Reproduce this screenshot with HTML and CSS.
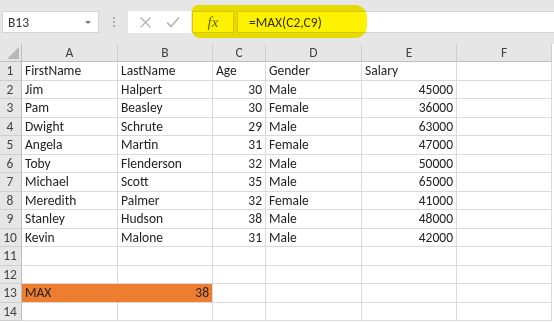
FILE: index.html
```html
<!DOCTYPE html>
<html lang="en">
<head>
    <meta charset="UTF-8">
    <title>Employees</title>
    <link rel="stylesheet" href="styles.css">
</head>
<body>
    <div class="toolbar">
        <div class="namebox">
            <span>B13</span>
            <span class="caret"></span>
        </div>
        <div class="grip">
            <svg width="4" height="12" viewBox="0 0 4 12"><circle cx="2" cy="2" r="1" fill="#9a9a9a"/><circle cx="2" cy="6" r="1" fill="#9a9a9a"/><circle cx="2" cy="10" r="1" fill="#9a9a9a"/></svg>
        </div>
        <div class="buttons">
            <svg width="13" height="13" viewBox="0 0 13 13"><path d="M1.5 1.5 L11.5 11.5 M11.5 1.5 L1.5 11.5" stroke="#b4b4b4" stroke-width="1.3" fill="none"/></svg>
            <svg width="14" height="12" viewBox="0 0 14 12"><path d="M1 6.5 L5 10.5 L13 1.5" stroke="#b4b4b4" stroke-width="1.6" fill="none"/></svg>
        </div>
        <div class="fx">fx</div>
        <div class="formula">=MAX(C2,C9)</div>
        <div class="highlight"></div>
    </div>

    <div class="sheet">
        <div class="corner"><span class="tri"></span></div>
        <div class="colhead">A</div>
        <div class="colhead">B</div>
        <div class="colhead">C</div>
        <div class="colhead">D</div>
        <div class="colhead">E</div>
        <div class="colhead">F</div>

        <div class="rowhead">1</div>
        <div class="cell">FirstName</div><div class="cell">LastName</div><div class="cell">Age</div><div class="cell">Gender</div><div class="cell">Salary</div><div class="cell"></div>

        <div class="rowhead">2</div>
        <div class="cell">Jim</div><div class="cell">Halpert</div><div class="cell num">30</div><div class="cell">Male</div><div class="cell num">45000</div><div class="cell"></div>

        <div class="rowhead">3</div>
        <div class="cell">Pam</div><div class="cell">Beasley</div><div class="cell num">30</div><div class="cell">Female</div><div class="cell num">36000</div><div class="cell"></div>

        <div class="rowhead">4</div>
        <div class="cell">Dwight</div><div class="cell">Schrute</div><div class="cell num">29</div><div class="cell">Male</div><div class="cell num">63000</div><div class="cell"></div>

        <div class="rowhead">5</div>
        <div class="cell">Angela</div><div class="cell">Martin</div><div class="cell num">31</div><div class="cell">Female</div><div class="cell num">47000</div><div class="cell"></div>

        <div class="rowhead">6</div>
        <div class="cell">Toby</div><div class="cell">Flenderson</div><div class="cell num">32</div><div class="cell">Male</div><div class="cell num">50000</div><div class="cell"></div>

        <div class="rowhead">7</div>
        <div class="cell">Michael</div><div class="cell">Scott</div><div class="cell num">35</div><div class="cell">Male</div><div class="cell num">65000</div><div class="cell"></div>

        <div class="rowhead">8</div>
        <div class="cell">Meredith</div><div class="cell">Palmer</div><div class="cell num">32</div><div class="cell">Female</div><div class="cell num">41000</div><div class="cell"></div>

        <div class="rowhead">9</div>
        <div class="cell">Stanley</div><div class="cell">Hudson</div><div class="cell num">38</div><div class="cell">Male</div><div class="cell num">48000</div><div class="cell"></div>

        <div class="rowhead">10</div>
        <div class="cell">Kevin</div><div class="cell">Malone</div><div class="cell num">31</div><div class="cell">Male</div><div class="cell num">42000</div><div class="cell"></div>

        <div class="rowhead">11</div>
        <div class="cell"></div><div class="cell"></div><div class="cell"></div><div class="cell"></div><div class="cell"></div><div class="cell"></div>

        <div class="rowhead">12</div>
        <div class="cell"></div><div class="cell"></div><div class="cell"></div><div class="cell"></div><div class="cell"></div><div class="cell"></div>

        <div class="rowhead">13</div>
        <div class="cell fill join">MAX</div><div class="cell fill num">38</div><div class="cell"></div><div class="cell"></div><div class="cell"></div><div class="cell"></div>

        <div class="rowhead">14</div>
        <div class="cell"></div><div class="cell"></div><div class="cell"></div><div class="cell"></div><div class="cell"></div><div class="cell"></div>
    </div>
</body>
</html>
```

FILE: styles.css
```css
/* Excel window */
body {
    margin: 0;
    background: #ffffff;
    font-family: Carlito, Lato, "Liberation Sans", sans-serif;
    color: #222222;
    overflow: hidden;
}

.toolbar {
    position: relative;
    display: flex;
    align-items: stretch;
    height: 44px;
    padding-top: 11px;
    box-sizing: border-box;
    background: #e6e6e6;
}

.toolbar > div {
    height: 22px;
}

.namebox {
    margin-left: 2px;
    width: 97px;
    box-sizing: border-box;
    background: #ffffff;
    border: 1px solid #d4d4d4;
    display: flex;
    align-items: center;
    justify-content: space-between;
    padding: 0 7px 0 5px;
    font-size: 13.5px;
    color: #333333;
}

.caret {
    width: 0;
    height: 0;
    border-left: 3px solid transparent;
    border-right: 3px solid transparent;
    border-top: 3px solid #777777;
}

.grip {
    width: 29px;
    display: flex;
    align-items: center;
    justify-content: center;
}

.buttons {
    width: 63px;
    background: #ffffff;
    display: flex;
    align-items: center;
    justify-content: space-around;
    padding: 0 4px;
    box-sizing: border-box;
}

.fx {
    width: 42px;
    margin-left: 1px;
    box-sizing: border-box;
    background: #ffffff;
    border: 1px solid #d4d4d4;
    display: flex;
    align-items: center;
    justify-content: center;
    font-family: "Liberation Serif", serif;
    font-style: italic;
    font-size: 15px;
    color: #666666;
}

.formula {
    flex: 1;
    margin-left: 3px;
    box-sizing: border-box;
    background: #ffffff;
    border: 1px solid #d4d4d4;
    border-right: none;
    display: flex;
    align-items: center;
    padding-left: 11px;
    font-size: 13.5px;
    color: #333333;
}

.highlight {
    position: absolute;
    left: 192px;
    top: 5px;
    width: 175px;
    height: 33px !important;
    background: #fff200;
    border-radius: 6px 12px 12px 8px;
    mix-blend-mode: multiply;
}

/* grid */
.sheet {
    display: grid;
    grid-template-columns: 22px 96px 95px 53px 96px 95px 95px;
    grid-template-rows: 18px repeat(14, 18.5px);
    font-size: 13.5px;
}

.corner,
.colhead,
.rowhead {
    background: #e6e6e6;
    color: #444444;
    box-sizing: border-box;
    border-right: 1px solid #cfcfcf;
    border-bottom: 1px solid #cfcfcf;
}

.corner {
    position: relative;
    border-bottom-color: #bdbdbd;
    border-right-color: #bdbdbd;
}

.tri {
    position: absolute;
    right: 2px;
    bottom: 2px;
    width: 0;
    height: 0;
    border-left: 12px solid transparent;
    border-bottom: 12px solid #b8b8b8;
}

.colhead {
    text-align: center;
    line-height: 17px;
    border-bottom-color: #bdbdbd;
}

.rowhead {
    text-align: center;
    line-height: 18px;
    border-right-color: #bdbdbd;
    padding-right: 1px;
}

.cell {
    box-sizing: border-box;
    border-right: 1px solid #dadada;
    border-bottom: 1px solid #dadada;
    padding: 0 3px;
    line-height: 18px;
    white-space: nowrap;
    overflow: hidden;
}

.num {
    text-align: right;
}

.fill {
    background: #ed7d31;
}

.join {
    border-right-color: #ed7d31;
}
```
